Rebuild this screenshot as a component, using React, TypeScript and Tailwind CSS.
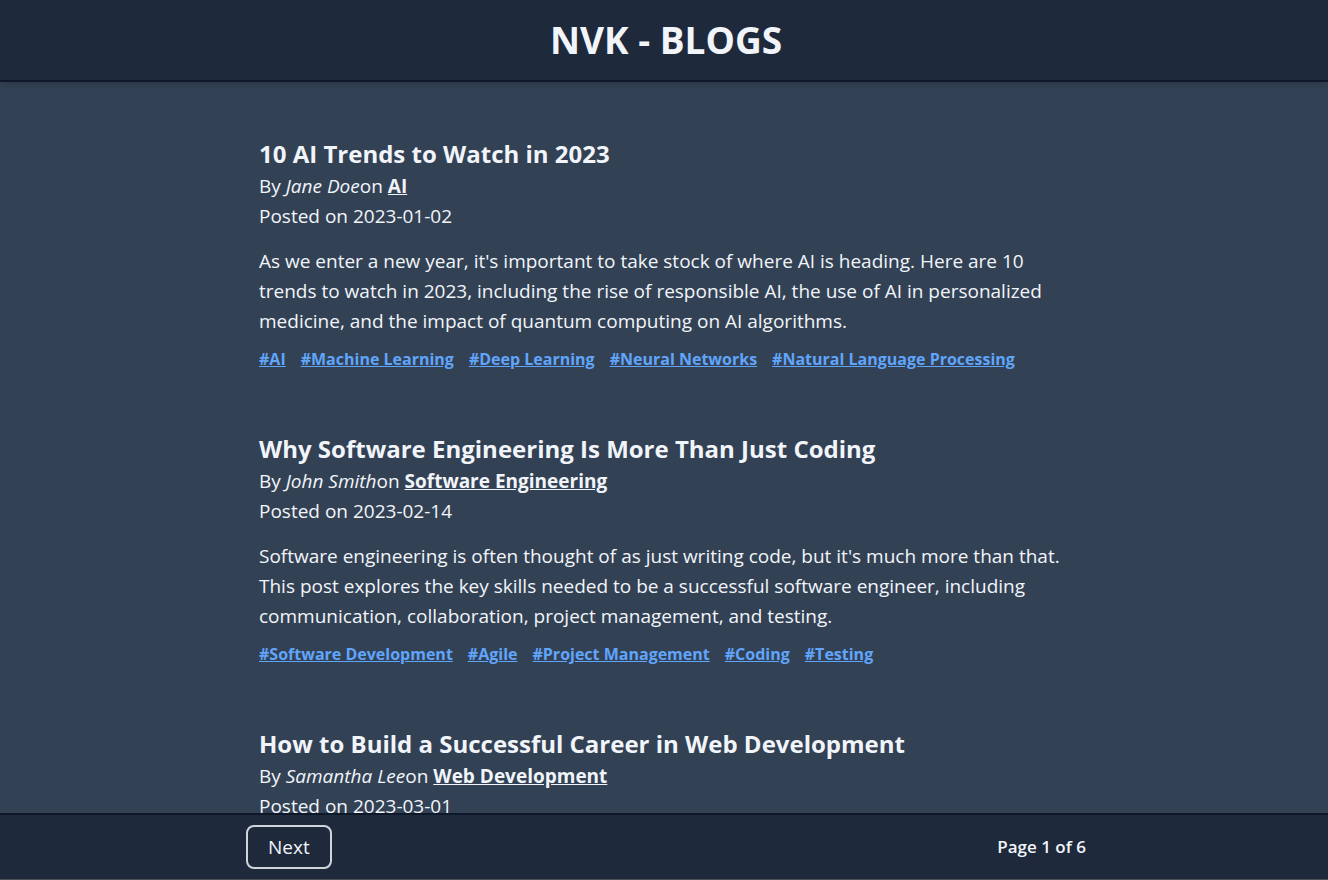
type Post = {
  title: string;
  author: string;
  category: string;
  date: string;
  excerpt?: string;
  tags: string[];
};

const posts: Post[] = [
  {
    title: "10 AI Trends to Watch in 2023",
    author: "Jane Doe",
    category: "AI",
    date: "2023-01-02",
    excerpt:
      "As we enter a new year, it's important to take stock of where AI is heading. Here are 10 trends to watch in 2023, including the rise of responsible AI, the use of AI in personalized medicine, and the impact of quantum computing on AI algorithms.",
    tags: ["AI", "Machine Learning", "Deep Learning", "Neural Networks", "Natural Language Processing"],
  },
  {
    title: "Why Software Engineering Is More Than Just Coding",
    author: "John Smith",
    category: "Software Engineering",
    date: "2023-02-14",
    excerpt:
      "Software engineering is often thought of as just writing code, but it's much more than that. This post explores the key skills needed to be a successful software engineer, including communication, collaboration, project management, and testing.",
    tags: ["Software Development", "Agile", "Project Management", "Coding", "Testing"],
  },
  {
    title: "How to Build a Successful Career in Web Development",
    author: "Samantha Lee",
    category: "Web Development",
    date: "2023-03-01",
    tags: [],
  },
];

function BlogPost({ post }: { post: Post }) {
  return (
    <article>
      <h2 className="text-[24px] leading-[34px] font-bold">{post.title}</h2>
      <p>
        By <em>{post.author}</em>on{" "}
        <a href="#category" className="font-bold underline">
          {post.category}
        </a>
      </p>
      <p>Posted on {post.date}</p>
      {post.excerpt && <p className="mt-[15px]">{post.excerpt}</p>}
      {post.tags.length > 0 && (
        <div className="mt-2 flex flex-wrap gap-x-[15px] text-[16px] font-bold text-[#60a5fa]">
          {post.tags.map((tag) => (
            <a key={tag} href="#tag" className="underline">
              #{tag}
            </a>
          ))}
        </div>
      )}
    </article>
  );
}

export default function App() {
  return (
    <div className="flex h-screen flex-col bg-[#334155] font-['Open_Sans','Noto_Sans',sans-serif] text-[19px] leading-[30px] text-[#f1f5f9]">
      <header className="relative border-b-2 border-[#0f172a] bg-[#1e293b] py-4 pr-3 pl-4 text-center shadow-md">
        <h1 className="text-[37px] leading-[48px] font-bold">NVK - BLOGS</h1>
      </header>
      <main className="min-h-0 flex-1 overflow-y-auto pr-3 pl-4 [scrollbar-width:none]">
        <div className="mx-auto flex max-w-[840px] flex-col gap-[58px] px-[13px] pt-[55px]">
          {posts.map((post) => (
            <BlogPost key={post.title} post={post} />
          ))}
        </div>
      </main>
      <footer className="border-t-2 border-b border-t-[#0f172a] border-b-[#4b4f55] bg-[#1e293b] py-[10px] pr-3 pl-4">
        <div className="mx-auto flex max-w-[840px] items-center justify-between">
          <button type="button" className="rounded-lg border-2 border-[#d1d5db] px-5 py-[5px]">
            Next
          </button>
          <p className="text-[17px] font-semibold">Page 1 of 6</p>
        </div>
      </footer>
    </div>
  );
}
